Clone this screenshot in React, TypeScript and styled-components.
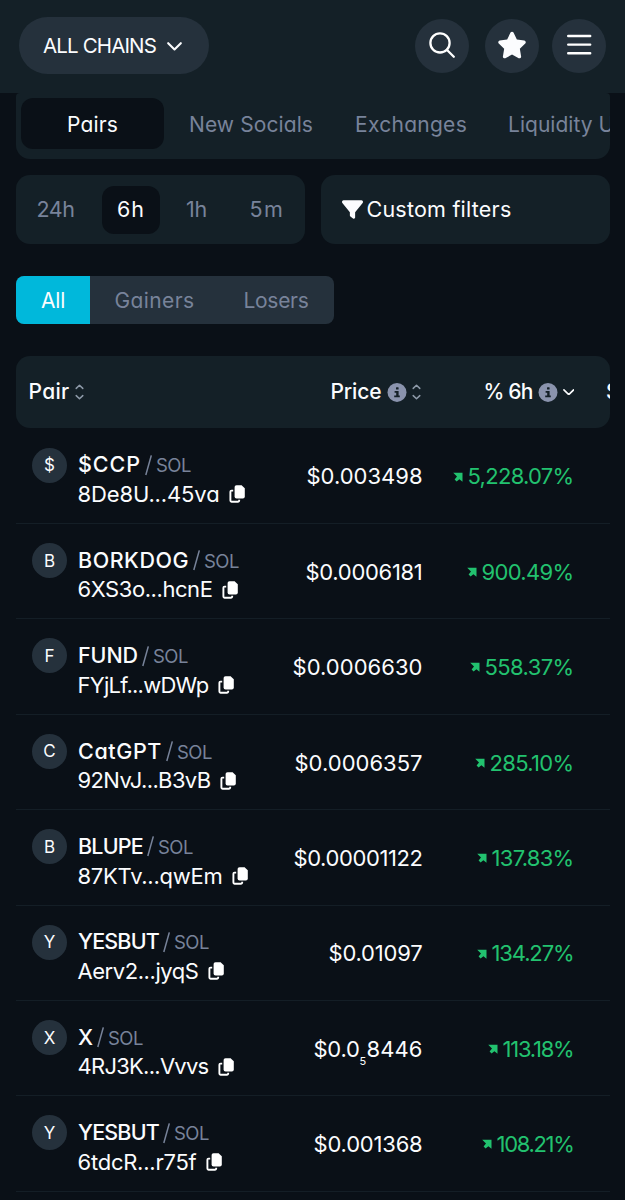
import React, { useLayoutEffect, useRef, useState } from "react";
import styled, { createGlobalStyle } from "styled-components";
import { FaStar, FaFilter } from "react-icons/fa6";

const color = {
  page: "#0a1017",
  panel: "#142027",
  raised: "#25313c",
  muted: "#78839a",
  text: "#fbfcfe",
  accent: "#00b8db",
  up: "#22c26f",
};

const Global = createGlobalStyle`
  html, body { margin: 0; background: ${color.page}; }
  body {
    font-family: Inter, "Liberation Sans", sans-serif;
    font-feature-settings: "cv11";
    color: ${color.text};
    overflow: hidden;
  }
  button { font: inherit; font-feature-settings: inherit; color: inherit; border: 0; padding: 0; background: none; }
  svg { display: block; flex: none; }
`;

const Label = styled.span<{ $size: number; $weight?: number; $width: number; $muted?: boolean }>`
  display: block;
  flex: none;
  width: ${(p) => p.$width}px;
  font-size: ${(p) => p.$size}px;
  font-weight: ${(p) => p.$weight ?? 400};
  line-height: 1.3;
  white-space: nowrap;
  color: ${(p) => (p.$muted ? color.muted : "inherit")};
`;

type TextProps = { children: string; width: number; size?: number; weight?: number; muted?: boolean };

/* A label whose tracking is adjusted so that it fills its column width. */
function Text({ children, width, size = 21, weight, muted }: TextProps) {
  const inner = useRef<HTMLSpanElement>(null);
  const [tracking, setTracking] = useState(0);
  useLayoutEffect(() => {
    if (!inner.current) return;
    const natural = inner.current.getBoundingClientRect().width - tracking * children.length;
    setTracking((width - natural) / children.length);
  }, [children, width, size, weight]);
  return (
    <Label $size={size} $weight={weight} $width={width} $muted={muted}>
      <span ref={inner} style={{ letterSpacing: tracking }}>{children}</span>
    </Label>
  );
}

const Page = styled.div`
  width: 625px;
  height: 1200px;
  overflow: hidden;
  background: ${color.page};
`;

const TopBar = styled.header`
  display: flex;
  align-items: center;
  box-sizing: border-box;
  height: 93px;
  padding: 0 19px 2px 19px;
  background: ${color.panel};
`;

const ChainPicker = styled.button`
  display: flex;
  align-items: center;
  gap: 11px;
  box-sizing: border-box;
  width: 190px;
  height: 57px;
  padding: 1px 0 0 24px;
  margin-right: auto;
  border-radius: 29px;
  background: ${color.raised};
`;

const RoundButton = styled.button<{ $gap?: number }>`
  display: flex;
  align-items: center;
  justify-content: center;
  box-sizing: border-box;
  width: 54px;
  height: 54px;
  padding-bottom: 2px;
  margin-left: ${(p) => p.$gap ?? 0}px;
  border-radius: 50%;
  background: ${color.raised};
`;

const Content = styled.main`
  margin: 0 16px;
`;

const Tabs = styled.nav`
  display: flex;
  align-items: center;
  box-sizing: border-box;
  width: 593.5px;
  height: 65.5px;
  padding: 0 0 4px 5px;
  border-radius: 4px 4px 14px 14px;
  background: ${color.panel};
  overflow: hidden;
`;

const Tab = styled.button<{ $active?: boolean; $gap?: number }>`
  display: flex;
  align-items: center;
  justify-content: center;
  flex: none;
  box-sizing: border-box;
  width: ${(p) => (p.$active ? "143px" : "auto")};
  height: 51px;
  padding-top: 2px;
  margin-left: ${(p) => p.$gap ?? 0}px;
  border-radius: 12px;
  background: ${(p) => (p.$active ? color.page : "transparent")};
`;

const FilterRow = styled.div`
  display: flex;
  gap: 16px;
  width: 593.5px;
  margin-top: 16.5px;
`;

const Periods = styled.div`
  display: flex;
  align-items: center;
  box-sizing: border-box;
  width: 289px;
  height: 69px;
  padding-left: 8px;
  border-radius: 14px;
  background: ${color.panel};
`;

const Period = styled.button<{ $active?: boolean; $width: number; $gap?: number }>`
  display: flex;
  align-items: center;
  justify-content: center;
  width: ${(p) => p.$width}px;
  height: 48px;
  margin-left: ${(p) => p.$gap ?? 0}px;
  border-radius: 12px;
  background: ${(p) => (p.$active ? color.page : "transparent")};
`;

const CustomFilters = styled.button`
  display: flex;
  align-items: center;
  gap: 3.5px;
  flex: 1;
  padding-left: 21px;
  border-radius: 14px;
  background: ${color.panel};
`;

const Segments = styled.div`
  display: flex;
  width: 317.5px;
  height: 48px;
  margin-top: 32px;
  border-radius: 8px;
  background: ${color.raised};
  overflow: hidden;
`;

const Segment = styled.button<{ $active?: boolean; $width: number }>`
  display: flex;
  align-items: center;
  justify-content: center;
  width: ${(p) => p.$width}px;
  padding-top: 2px;
  background: ${(p) => (p.$active ? color.accent : "transparent")};
`;

const TableHead = styled.div`
  display: flex;
  align-items: center;
  box-sizing: border-box;
  width: 593.5px;
  height: 72px;
  margin: 32px 0 0.7px;
  padding-left: 12.5px;
  border-radius: 14px;
  background: ${color.panel};
  overflow: hidden;
`;

const HeadCell = styled.div<{ $width: number }>`
  display: flex;
  align-items: center;
  flex: none;
  gap: 5px;
  width: ${(p) => p.$width}px;
`;

const Row = styled.div`
  display: flex;
  box-sizing: border-box;
  width: 593.5px;
  height: 95.4px;
  border-bottom: 1.5px solid #141e26;
`;

const Avatar = styled.div`
  display: flex;
  align-items: center;
  justify-content: center;
  flex: none;
  width: 35px;
  height: 35px;
  margin: 19px 11px 0 16px;
  border-radius: 50%;
  background: ${color.raised};
  font-size: 17px;
`;

const PairInfo = styled.div`
  flex: 1;
  padding-top: 22.2px;
`;

const Line = styled.div<{ $gap: number; $shift?: number }>`
  display: flex;
  align-items: center;
  gap: ${(p) => p.$gap}px;
  height: 29px;
  margin-left: ${(p) => p.$shift ?? 0}px;
`;

const Value = styled.div<{ $up?: boolean; $width: number }>`
  display: flex;
  align-items: center;
  justify-content: flex-end;
  gap: 5px;
  width: ${(p) => p.$width}px;
  height: 96px;
  color: ${(p) => (p.$up ? color.up : "inherit")};
`;

const Subscript = styled.sub`
  width: 6px;
  margin: 24px -4px 0 -5px;
  font-size: 11px;
  line-height: 1;
`;

const EdgeSpace = styled.div`
  flex: none;
  width: 36px;
`;

const Chevron = ({ width = 15 }: { width?: number }) => (
  <svg width={width} height={width * 0.6} viewBox="0 0 15 9" fill="none" stroke="currentColor" strokeWidth="2.1" strokeLinecap="round" strokeLinejoin="round">
    <path d="M1.2 1.2 7.5 7.4l6.3-6.2" />
  </svg>
);

const SortIcon = () => (
  <svg width="9" height="16" viewBox="0 0 9 16" fill="none" stroke="#8d99a8" strokeWidth="1.5" strokeLinecap="round" strokeLinejoin="round">
    <path d="M1.2 4.4 4.5 1.2l3.3 3.2M1.2 11.6l3.3 3.2 3.3-3.2" />
  </svg>
);

const InfoIcon = () => (
  <svg width="20" height="20" viewBox="0 0 20 20">
    <circle cx="10" cy="10.4" r="9.5" fill="#8a93ad" />
    <g fill={color.panel}>
      <rect x="9" y="5.2" width="2.6" height="2.4" rx="0.6" />
      <path d="M7.6 8.9h4v4.5h1.2v1.8H7.2v-1.8h2v-2.7H7.6z" />
    </g>
  </svg>
);

const SearchIcon = () => (
  <svg width="28" height="28" viewBox="0 0 28 28" fill="none" stroke="#fff" strokeWidth="2.3" strokeLinecap="round">
    <circle cx="12" cy="11.9" r="9.6" />
    <path d="m18.8 18.8 7 7" />
  </svg>
);

const MenuIcon = () => (
  <svg width="26" height="24" viewBox="0 0 26 24" stroke="#fff" strokeWidth="2.4" strokeLinecap="round">
    <path d="M2.2 3h22M2.2 11.6h22M2.2 20.2h22" />
  </svg>
);

const CopyIcon = () => (
  <svg width="17" height="18" viewBox="0 0 17 18">
    <path d="M7.5.2h5.1l3.2 3v8.3a1.9 1.9 0 0 1-1.9 1.9H7.5a1.9 1.9 0 0 1-1.9-1.9V2.1A1.9 1.9 0 0 1 7.5.2z" fill="#fff" />
    <path d="M4.2 5.6H2.5a1.1 1.1 0 0 0-1.1 1.1v8.9a1.1 1.1 0 0 0 1.1 1.1h6.6a1.1 1.1 0 0 0 1.1-1.1v-.8" fill="none" stroke="#fff" strokeWidth="1.9" />
  </svg>
);

const SlashIcon = () => (
  <svg width="7" height="21" viewBox="0 0 7 21" stroke={color.muted} strokeWidth="1.5" fill="none">
    <path d="M6.3.4.8 20" />
  </svg>
);

const UpIcon = () => (
  <svg width="10" height="10" viewBox="0 0 10 10" fill="currentColor">
    <path d="M.2.8h9.3v9L6.4 7.2 3.6 9.6 1.6 7.6 4 4.6z" />
  </svg>
);

type Pair = {
  icon: string; name: string; nameW: number; addr: string; addrW: number;
  price: string; priceW: number; sub?: [string, string, number]; pct: string; pctW: number;
};

const pairs: Pair[] = [
  { icon: "$", name: "$CCP", nameW: 63, addr: "8De8U...45va", addrW: 142, price: "$0.003498", priceW: 116, pct: "5,228.07%", pctW: 106 },
  { icon: "B", name: "BORKDOG", nameW: 111, addr: "6XS3o...hcnE", addrW: 135, price: "$0.0006181", priceW: 117, pct: "900.49%", pctW: 92 },
  { icon: "F", name: "FUND", nameW: 60, addr: "FYjLf...wDWp", addrW: 131, price: "$0.0006630", priceW: 130, pct: "558.37%", pctW: 89 },
  { icon: "C", name: "CatGPT", nameW: 84, addr: "92NvJ...B3vB", addrW: 133, price: "$0.0006357", priceW: 128, pct: "285.10%", pctW: 84 },
  { icon: "B", name: "BLUPE", nameW: 65, addr: "87KTv...qwEm", addrW: 145, price: "$0.00001122", priceW: 129, pct: "137.83%", pctW: 82 },
  { icon: "Y", name: "YESBUT", nameW: 81, addr: "Aerv2...jyqS", addrW: 121, price: "$0.01097", priceW: 94, pct: "134.27%", pctW: 82 },
  { icon: "X", name: "X", nameW: 15, addr: "4RJ3K...Vvvs", addrW: 131, price: "$0.0", priceW: 46, sub: ["5", "8446", 56], pct: "113.18%", pctW: 71 },
  { icon: "Y", name: "YESBUT", nameW: 81, addr: "6tdcR...r75f", addrW: 119, price: "$0.001368", priceW: 109, pct: "108.21%", pctW: 77 },
];

export default function App() {
  return (
    <Page>
      <Global />
      <TopBar>
        <ChainPicker>
          <Text width={113} size={20.5}>ALL CHAINS</Text>
          <Chevron />
        </ChainPicker>
        <RoundButton><SearchIcon /></RoundButton>
        <RoundButton $gap={15.5}><FaStar size={30} /></RoundButton>
        <RoundButton $gap={13.5}><MenuIcon /></RoundButton>
      </TopBar>
      <Content>
        <Tabs>
          <Tab $active><Text width={51}>Pairs</Text></Tab>
          <Tab $gap={25}><Text width={124} muted>New Socials</Text></Tab>
          <Tab $gap={42}><Text width={112} muted>Exchanges</Text></Tab>
          <Tab $gap={41}><Text width={171} muted>Liquidity Unlocks</Text></Tab>
        </Tabs>
        <FilterRow>
          <Periods>
            <Period $width={63}><Text width={38} size={21.5} muted>24h</Text></Period>
            <Period $width={58} $gap={15} $active><Text width={28} size={21.5}>6h</Text></Period>
            <Period $width={73}><Text width={21} size={21.5} muted>1h</Text></Period>
            <Period $width={68}><Text width={35} size={21.5} muted>5m</Text></Period>
          </Periods>
          <CustomFilters>
            <FaFilter size={21} />
            <Text width={145} size={21.5}>Custom filters</Text>
          </CustomFilters>
        </FilterRow>
        <Segments>
          <Segment $active $width={74}><Text width={24}>All</Text></Segment>
          <Segment $width={129}><Text width={80} muted>Gainers</Text></Segment>
          <Segment $width={114}><Text width={65} muted>Losers</Text></Segment>
        </Segments>
        <TableHead>
          <HeadCell $width={302}><Text width={41} weight={500}>Pair</Text><SortIcon /></HeadCell>
          <HeadCell $width={153}><Text width={51} weight={500}>Price</Text><InfoIcon /><SortIcon /></HeadCell>
          <HeadCell $width={122.5}><Text width={49} weight={500}>% 6h</Text><InfoIcon /><Chevron width={11.5} /></HeadCell>
          <Text width={14} weight={500}>S</Text>
        </TableHead>
        {pairs.map((p, i) => (
          <Row key={i}>
            <Avatar>{p.icon}</Avatar>
            <PairInfo>
              <Line $gap={4}>
                <Text width={p.nameW} size={21.5} weight={500}>{p.name}</Text>
                <SlashIcon />
                <Text width={35} size={18.5} muted>SOL</Text>
              </Line>
              <Line $gap={9} $shift={-0.5}>
                <Text width={p.addrW} size={22}>{p.addr}</Text>
                <CopyIcon />
              </Line>
            </PairInfo>
            <Value $width={120}>
              <Text width={p.priceW} size={22}>{p.price}</Text>
              {p.sub && <Subscript>{p.sub[0]}</Subscript>}
              {p.sub && <Text width={p.sub[2]} size={22}>{p.sub[1]}</Text>}
            </Value>
            <Value $up $width={151}>
              <UpIcon />
              <Text width={p.pctW} size={22}>{p.pct}</Text>
            </Value>
            <EdgeSpace />
          </Row>
        ))}
      </Content>
    </Page>
  );
}
